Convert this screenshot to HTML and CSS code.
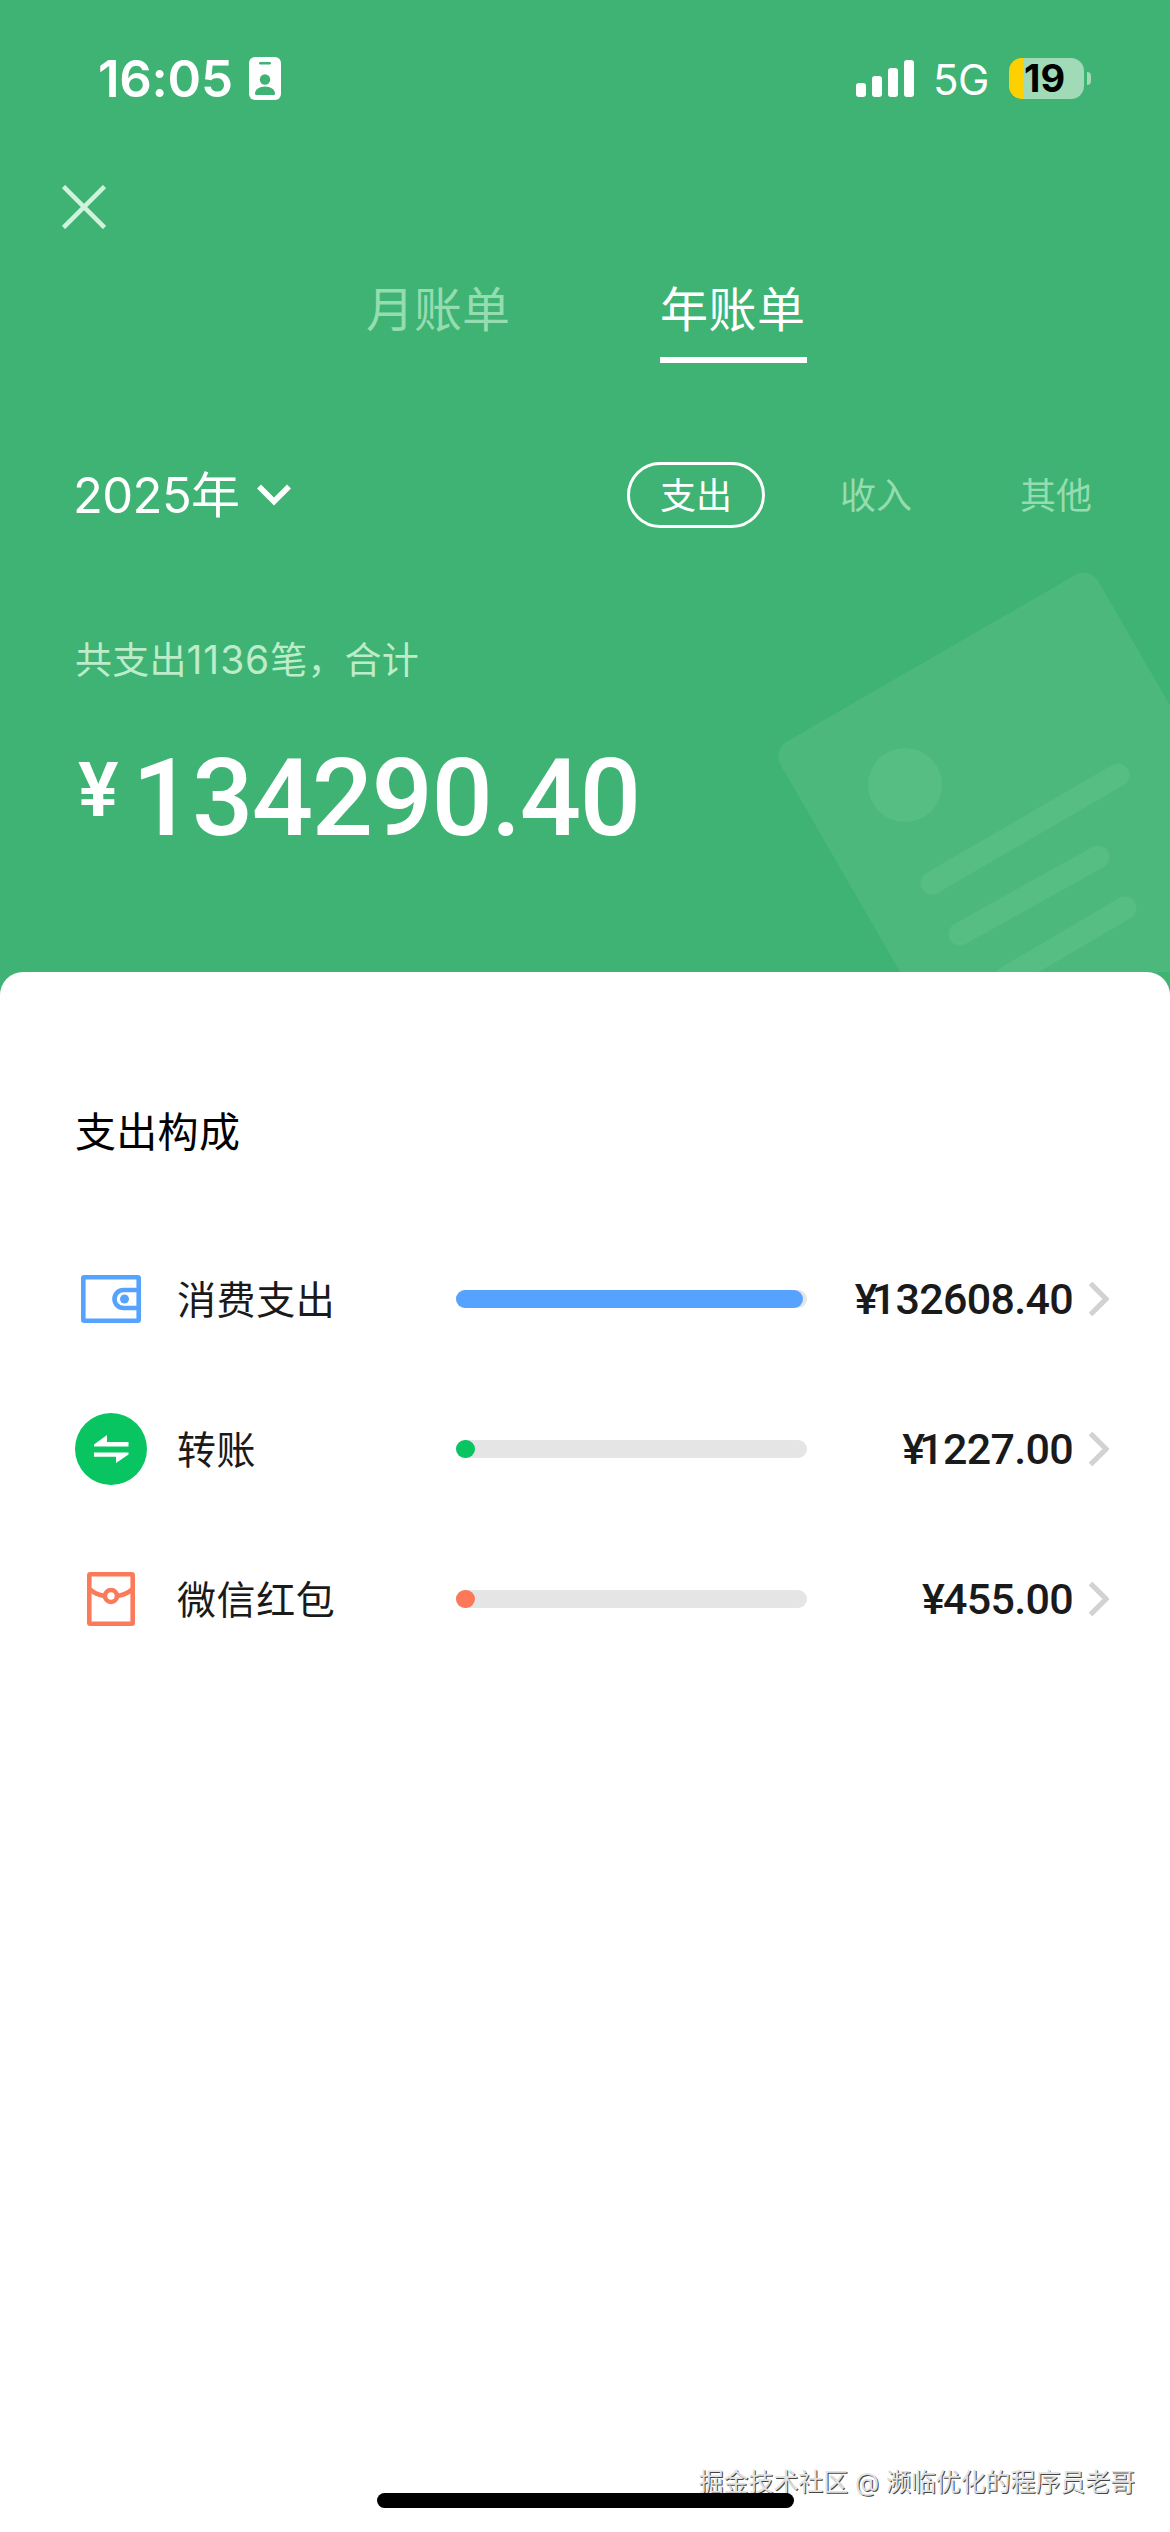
FILE: index.html
```html
<!DOCTYPE html>
<html lang="zh-CN">
<head>
<meta charset="utf-8">
<title>年账单</title>
<link rel="stylesheet" href="styles.css">
</head>
<body>
<div class="screen">
  <header class="hero">
    <svg class="hero-art" viewBox="0 0 400 412" aria-hidden="true">
      <rect x="0" y="0" width="367" height="520" rx="17" fill="#4cb87b" transform="translate(2 190) rotate(-30)"/>
      <g fill="none" stroke="#57be83" stroke-width="23" stroke-linecap="round">
        <path d="M162 323L348 215M190 374L328 297M236 418L355 348"/>
      </g>
      <circle cx="135" cy="225" r="37" fill="#57be83"/>
    </svg>

    <div class="status">
      <span class="time">16:05</span>
      <svg class="badge" viewBox="0 0 32 43" aria-hidden="true">
        <rect width="32" height="43" rx="6" fill="#fff"/>
        <rect x="10" y="5" width="12" height="2.6" rx="1.3" fill="#3eb373"/>
        <circle cx="16" cy="22.500" r="5.200" fill="#3eb373"/>
        <path d="M6 36.500c0-4 4.500-7 10-7s10 3 10 7c0 1-.6 1.500-1.500 1.500h-17C6.600 38 6 37.500 6 36.500z" fill="#3eb373"/>
      </svg>
      <svg class="signal" viewBox="0 0 58 37" fill="#fff" aria-hidden="true">
        <rect x="0" y="23" width="10" height="14" rx="3"/>
        <rect x="16" y="16" width="10" height="21" rx="3"/>
        <rect x="32" y="8" width="10" height="29" rx="3"/>
        <rect x="48" y="0" width="10" height="37" rx="3"/>
      </svg>
      <span class="network">5G</span>
      <span class="battery">19</span>
      <span class="battery-tip"></span>
    </div>

    <svg class="close" viewBox="0 0 44 44" aria-hidden="true">
      <path d="M1.500 1.500L42.500 42.500M42.500 1.500L1.500 42.500" stroke="#d0f3db" stroke-width="4.500" fill="none"/>
    </svg>

    <nav class="tabs">
      <span class="tab tab-month">月账单</span>
      <span class="tab tab-active">年账单</span>
    </nav>

    <div class="filters">
      <span class="year">2025年</span>
      <svg class="year-arrow" viewBox="0 0 34 22" aria-hidden="true">
        <path d="M2 2.500L17 17.500L32 2.500" stroke="#fff" stroke-width="5.500" fill="none"/>
      </svg>
      <div class="kinds">
        <span class="kind kind-active">支出</span>
        <span class="kind">收入</span>
        <span class="kind">其他</span>
      </div>
    </div>

    <p class="count">共支出<span class="count-number">1136</span>笔，合计</p>
    <p class="total"><span class="total-sign">¥</span><span>134290.40</span></p>
  </header>

  <main class="sheet">
    <h1 class="sheet-title">支出构成</h1>
    <div class="row">
      <svg class="row-icon" viewBox="0 0 72 72" fill="none" stroke="#56a2ff" aria-hidden="true">
        <rect x="8.300" y="14.300" width="55.400" height="43.400" rx="1" stroke-width="4.600"/>
        <path d="M63 27H48.500a9 9 0 0 0 0 18H63" stroke-width="4.600"/>
        <circle cx="49.500" cy="36" r="4.500" fill="#56a2ff" stroke="none"/>
      </svg>
      <span class="row-name">消费支出</span>
      <span class="track"><span class="fill fill-blue" style="width:98.8%"></span></span>
      <span class="amount"><span class="sign sign-tight">¥</span>132608.40</span>
      <svg class="arrow" viewBox="0 0 21 34" aria-hidden="true"><path d="M2.500 1.500L18 17L2.500 32.500"/></svg>
    </div>
    <div class="row">
      <svg class="row-icon" viewBox="0 0 72 72" aria-hidden="true">
        <circle cx="36" cy="36" r="36" fill="#08c461"/>
        <path d="M19 33.500V31.500L32 22V29H53.500V33.500zM53.500 39.500V41.500L41 50V43.800H19V39.500z" fill="#fff"/>
      </svg>
      <span class="row-name">转账</span>
      <span class="track"><span class="fill fill-green" style="width:0.9%"></span></span>
      <span class="amount"><span class="sign sign-tight">¥</span>1227.00</span>
      <svg class="arrow" viewBox="0 0 21 34" aria-hidden="true"><path d="M2.500 1.500L18 17L2.500 32.500"/></svg>
    </div>
    <div class="row">
      <svg class="row-icon" viewBox="0 0 72 72" fill="none" stroke="#fa7a5a" stroke-width="4.600" aria-hidden="true">
        <rect x="14.300" y="11.300" width="43.400" height="49.400" rx="1"/>
        <path d="M15 26.500C19 30 24 32 29.500 33M57 26.500C53 30 48 32 42.500 33"/>
        <circle cx="36" cy="33" r="6"/>
      </svg>
      <span class="row-name">微信红包</span>
      <span class="track"><span class="fill fill-red" style="width:0.3%"></span></span>
      <span class="amount"><span class="sign">¥</span>455.00</span>
      <svg class="arrow" viewBox="0 0 21 34" aria-hidden="true"><path d="M2.500 1.500L18 17L2.500 32.500"/></svg>
    </div>
  </main>

  <div class="watermark">掘金技术社区 @ 濒临优化的程序员老哥</div>
  <div class="home-bar"></div>
</div>
</body>
</html>
```

FILE: styles.css
```css
* {
  box-sizing: border-box;
}

body {
  margin: 0;
  font-family: Inter, "Noto Sans CJK SC", sans-serif;
  background: #3eb373;
}

.screen {
  position: relative;
  display: flex;
  flex-direction: column;
  width: 1170px;
  height: 2532px;
  overflow: hidden;
}

.hero {
  position: relative;
  height: 972px;
  flex: none;
  display: flex;
  flex-direction: column;
  color: #fff;
}

.hero-art {
  position: absolute;
  right: 0;
  bottom: 0;
  width: 400px;
  height: 412px;
}

.status {
  display: flex;
  align-items: center;
  height: 156px;
  padding: 0 79px 0 98px;
}

.time {
  width: 151px;
  font-size: 51px;
  font-weight: 600;
  line-height: 60px;
  letter-spacing: -0.300px;
  padding-top: 1px;
  white-space: nowrap;
}

.badge {
  width: 32px;
  height: 43px;
}

.signal {
  width: 58px;
  height: 37px;
  margin-left: auto;
}

.network {
  margin-left: 19px;
  width: 76px;
  font-size: 42px;
  line-height: 50px;
  letter-spacing: -0.500px;
  padding-top: 3px;
}

.battery {
  width: 75px;
  height: 41px;
  border-radius: 13px;
  background: linear-gradient(90deg, #ffd000 14.500px, #a0dab6 14.500px);
  color: #000;
  font-size: 38px;
  font-weight: 700;
  line-height: 41px;
  padding-left: 15px;
}

.battery-tip {
  width: 4px;
  height: 13px;
  margin-left: 3px;
  border-radius: 0 4px 4px 0;
  background: #a0dab6;
}

.close {
  width: 44px;
  height: 44px;
  margin: 29px 0 0 62px;
}

.tabs {
  display: flex;
  gap: 149px;
  margin: 40px 0 0 364px;
}

.tab {
  width: 147px;
  height: 94px;
  font-size: 48px;
  letter-spacing: 0.500px;
  line-height: 82px;
  color: #95dcb0;
  white-space: nowrap;
}

.tab-month {
  padding-left: 2px;
  letter-spacing: 0;
}

.tab-active {
  color: #fff;
  border-bottom: 6px solid #fff;
}

.filters {
  display: flex;
  align-items: center;
  height: 66px;
  margin: 99px 45px 0 73px;
}

.year {
  font-size: 49px;
  letter-spacing: -0.600px;
  line-height: 66px;
  padding-top: 2px;
}

.year-arrow {
  width: 34px;
  height: 22px;
  margin-left: 18px;
}

.kinds {
  display: flex;
  gap: 42px;
  margin-left: auto;
}

.kind {
  width: 138px;
  height: 66px;
  border: 3px solid transparent;
  border-radius: 33px;
  font-size: 36px;
  line-height: 62px;
  text-align: center;
  color: #95dcb0;
}

.kind-active {
  border-color: #fff;
  color: #fff;
}

.count {
  margin: 102px 0 0 75px;
  font-size: 37px;
  letter-spacing: 0.200px;
  line-height: 60px;
  color: #bcecca;
}

.count-number {
  font-size: 39px;
  letter-spacing: 0.900px;
}

.total {
  display: flex;
  align-items: flex-start;
  margin: 43px 0 0 78px;
  font-family: Roboto, sans-serif;
  font-size: 108px;
  font-weight: 500;
  letter-spacing: -1.500px;
  line-height: 128px;
}

.total-sign {
  width: 54px;
  font-size: 76px;
  font-weight: 600;
  line-height: 112px;
}

.sheet {
  position: relative;
  flex: 1;
  border-radius: 23px 23px 0 0;
  background: #fff;
  padding: 130px 60px 0 75px;
}

.sheet-title {
  margin: 0 0 62px;
  font-size: 41px;
  font-weight: 400;
  letter-spacing: 0.300px;
  line-height: 60px;
  color: #000;
}

.row {
  display: flex;
  align-items: center;
  height: 150px;
}

.row-icon {
  width: 72px;
  height: 72px;
  flex: none;
}

.row-name {
  width: 279px;
  margin-left: 30px;
  padding-top: 2px;
  font-size: 39px;
  letter-spacing: 0.600px;
  line-height: 60px;
  color: #1a1a1a;
}

.track {
  display: flex;
  width: 351px;
  height: 18px;
  border-radius: 9px;
  background: #e5e5e5;
}

.fill {
  min-width: 19px;
  border-radius: 9px;
}

.fill-blue {
  background: #56a2ff;
}

.fill-green {
  background: #08c461;
}

.fill-red {
  background: #fb7958;
}

.amount {
  width: 266px;
  text-align: right;
  font-family: Roboto, sans-serif;
  font-size: 43px;
  font-weight: 500;
  letter-spacing: -0.700px;
  line-height: 60px;
  color: #1a1a1a;
}

.sign {
  margin-right: -1px;
}

.sign-tight {
  margin-right: -5px;
}

.arrow {
  width: 21px;
  height: 34px;
  margin-left: 15px;
  fill: none;
  stroke: #d2d2d2;
  stroke-width: 5.200px;
}

.watermark {
  position: absolute;
  right: 35px;
  bottom: 32px;
  font-size: 25px;
  letter-spacing: -0.100px;
  line-height: 36px;
  color: #e2e2e2;
  text-shadow: 1px 1px 0 #444;
  white-space: nowrap;
}

.home-bar {
  position: absolute;
  left: 377px;
  bottom: 24px;
  width: 417px;
  height: 15px;
  border-radius: 8px;
  background: #000;
}
```
